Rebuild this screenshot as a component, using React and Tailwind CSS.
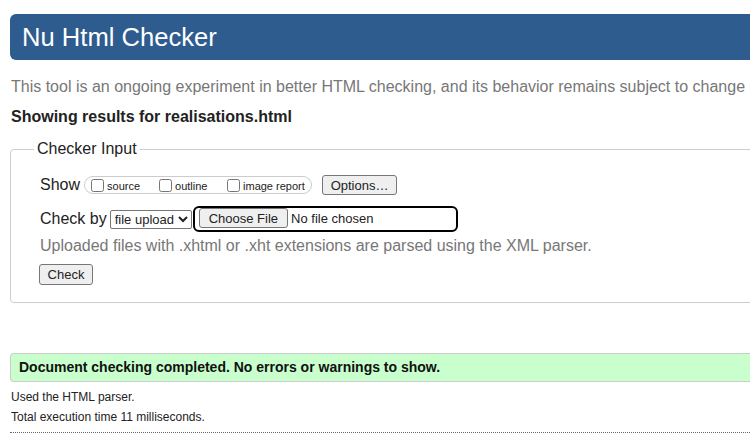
import React from "react";

const App = () => {
    return (
        <div className="w-[750px] h-[438px] overflow-hidden bg-white" style={{ fontFamily: '"Liberation Sans", Arial, sans-serif' }}>
            <div className="w-[800px] pl-[10px]">
                {/* Title bar */}
                <div className="mt-[14px] h-[46px] bg-[#2e5c8f] rounded-l-[6px] flex items-center pl-[12px] pt-[2px]">
                    <h1 className="text-[25.6px] leading-none text-white">Nu Html Checker</h1>
                </div>

                <p className="mt-[18px] text-[16px] leading-[18px] text-[#777] whitespace-nowrap pl-[1px]">
                    This tool is an ongoing experiment in better HTML checking, and its behavior remains subject to change
                </p>
                <p className="mt-[12px] text-[16px] leading-[18px] font-bold text-[#222] pl-[1px]">
                    Showing results for realisations.html
                </p>

                {/* Checker input */}
                <fieldset className="mt-[14px] border border-[#ccc] rounded-l-[4px] pl-[29px] pb-[16px] text-[#222]">
                    <legend className="-ml-[6px] px-[3px] text-[16px] leading-[18px]">Checker Input</legend>

                    <div className="mt-[17px] h-[20px] flex items-center">
                        <span className="text-[16px] mr-[4px]">Show</span>
                        <div className="h-[18px] w-[228px] border border-[#ccc] rounded-full flex items-center pl-[6px] text-[11px]">
                            <label className="flex items-center w-[68px]">
                                <input type="checkbox" className="w-[13px] h-[13px] m-0 mr-[3px]" />
                                <span className="pt-[3px]">source</span>
                            </label>
                            <label className="flex items-center w-[68px]">
                                <input type="checkbox" className="w-[13px] h-[13px] m-0 mr-[3px]" />
                                <span className="pt-[3px]">outline</span>
                            </label>
                            <label className="flex items-center">
                                <input type="checkbox" className="w-[13px] h-[13px] m-0 mr-[3px]" />
                                <span className="pt-[3px]">image report</span>
                            </label>
                        </div>
                        <button className="ml-[10px] h-[20px] w-[75px] text-[13px] bg-[#efefef] border border-[#767676] rounded-[3px]">
                            Options…
                        </button>
                    </div>

                    <div className="mt-[11px] h-[26px] flex items-center">
                        <span className="text-[16px] mr-[3px]">Check by</span>
                        <select className="h-[19px] text-[13px] border border-[#767676] rounded-[2px] bg-white" defaultValue="upload">
                            <option value="upload">file upload</option>
                        </select>
                        <input
                            type="file"
                            className="ml-[1px] h-[26px] w-[265px] text-[13px] border-2 border-black rounded-[6px] px-[4px] file:h-[20px] file:px-[9px] file:mr-[3px] file:text-[13px] file:bg-[#efefef] file:border file:border-[#767676] file:rounded-[3px]"
                        />
                    </div>

                    <p className="mt-[5px] text-[16px] leading-[18px] text-[#777]">
                        Uploaded files with .xhtml or .xht extensions are parsed using the XML parser.
                    </p>

                    <button className="mt-[9px] -ml-[1px] h-[21px] w-[54px] text-[13px] bg-[#efefef] border border-[#767676] rounded-[3px]">
                        Check
                    </button>
                </fieldset>

                {/* Result */}
                <div className="mt-[50px] h-[29px] bg-[#c8ffcc] border border-r-0 border-[#ccc] rounded-l-[4px] flex items-center pl-[8px]">
                    <p className="text-[14px] font-bold text-[#111]">
                        Document checking completed. No errors or warnings to show.
                    </p>
                </div>
                <p className="mt-[7px] text-[12px] leading-[16px] text-[#222] pl-[1px]">Used the HTML parser.</p>
                <p className="mt-[4px] text-[12px] leading-[16px] text-[#222] pl-[1px]">Total execution time 11 milliseconds.</p>
                <div className="mt-[7px] border-t border-dotted border-[#666]"></div>
            </div>
        </div>
    );
};

export default App;
